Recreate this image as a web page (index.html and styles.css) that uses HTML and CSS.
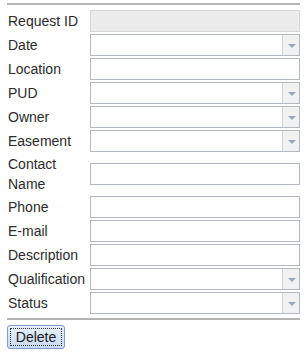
FILE: index.html
```html
<!DOCTYPE html>
<html lang="en">
<head>
    <meta charset="UTF-8">
    <meta name="viewport" content="width=device-width, initial-scale=1.0">
    <title>Request</title>
    <link rel="stylesheet" href="styles.css">
</head>
<body>
    <div class="panel">
        <div class="form-grid">
            <label class="lbl">Request ID</label>
            <div class="field readonly"></div>

            <label class="lbl">Date</label>
            <div class="field combo"><span class="drop"></span></div>

            <label class="lbl">Location</label>
            <div class="field"></div>

            <label class="lbl">PUD</label>
            <div class="field combo"><span class="drop"></span></div>

            <label class="lbl">Owner</label>
            <div class="field combo"><span class="drop"></span></div>

            <label class="lbl">Easement</label>
            <div class="field combo"><span class="drop"></span></div>

            <label class="lbl">Contact Name</label>
            <div class="field"></div>

            <label class="lbl">Phone</label>
            <div class="field"></div>

            <label class="lbl">E-mail</label>
            <div class="field"></div>

            <label class="lbl">Description</label>
            <div class="field"></div>

            <label class="lbl">Qualification</label>
            <div class="field combo"><span class="drop"></span></div>

            <label class="lbl">Status</label>
            <div class="field combo"><span class="drop"></span></div>
        </div>
    </div>
    <div class="actions">
        <button type="button" class="btn"><span class="btn-text">Delete</span></button>
    </div>
</body>
</html>
```

FILE: styles.css
```css
body {
    margin: 0;
    padding: 0;
    font-family: 'Liberation Sans', Arial, sans-serif;
    font-size: 14px;
    color: #2b2b2b;
    background-color: #fff;
}
.panel {
    margin: 3px 5px 0 7px;
    border-top: 2px solid #b4b4b4;
    border-bottom: 2px solid #b4b4b4;
    padding: 5px 0 4px 0;
}
.form-grid {
    display: grid;
    grid-template-columns: 83px 210px;
    row-gap: 2px;
}
.lbl {
    display: flex;
    align-items: center;
    padding-left: 1px;
    line-height: 20px;
}
.field {
    align-self: center;
    position: relative;
    height: 22px;
    box-sizing: border-box;
    border: 1px solid #b3b8c6;
    background-color: #fff;
}
.field.readonly {
    background-color: #ececec;
    border-color: #d6d6d6;
}
.drop {
    position: absolute;
    top: 0;
    right: 0;
    bottom: 0;
    width: 16px;
    background-color: #f1f1f1;
    border-left: 1px solid #d0d3da;
}
.drop::after {
    content: "";
    position: absolute;
    left: 5px;
    top: 9px;
    border-left: 4px solid transparent;
    border-right: 4px solid transparent;
    border-top: 4px solid #94a6c8;
}
.actions {
    padding: 5px 0 0 7px;
}
.btn {
    font-family: 'Liberation Sans', Arial, sans-serif;
    font-size: 14px;
    color: #1a1a1a;
    width: 58px;
    height: 24px;
    padding: 2px;
    border: 1px solid #7f9dc6;
    border-radius: 3px;
    background: linear-gradient(#e8f0fa, #c9dbf1);
}
.btn-text {
    display: block;
    border: 1px dotted #333;
    line-height: 16px;
}
```
